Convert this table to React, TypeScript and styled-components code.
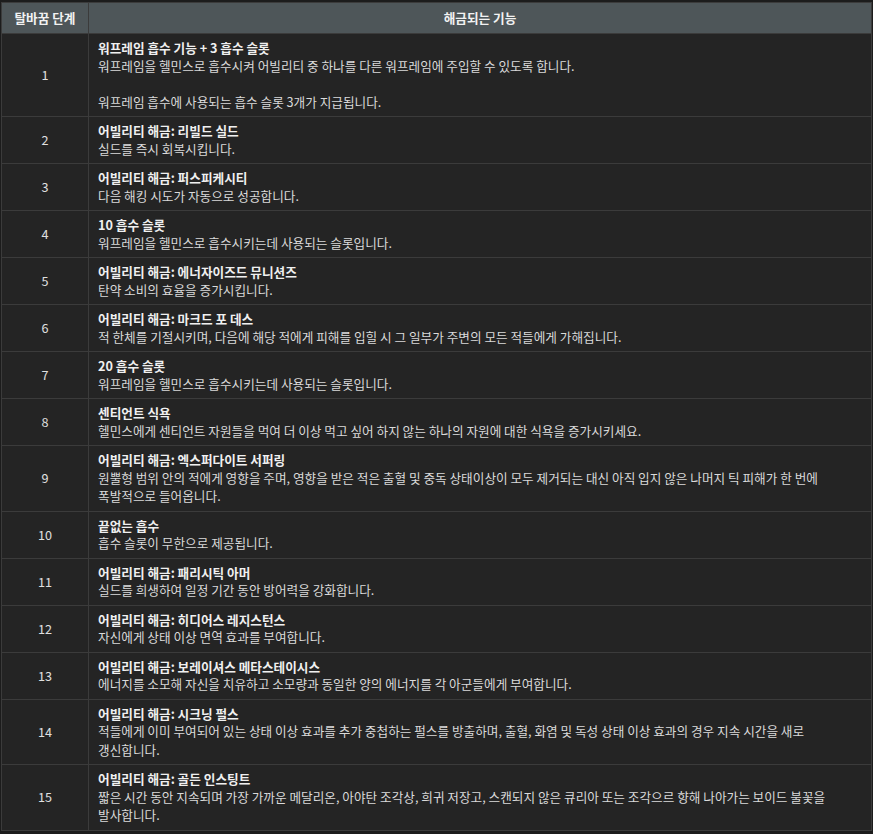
import React from "react";
import styled, { createGlobalStyle } from "styled-components";

const Global = createGlobalStyle`
  html, body { margin: 0; padding: 0; background: #1c1c1c; }
  body { font-family: "Noto Sans CJK KR", "Noto Sans", sans-serif; }
`;

const Wrap = styled.div`
  padding: 2px 1px 1px 1px;
`;

const Table = styled.table`
  width: 871px;
  border-collapse: collapse;
  background: #242424;
  border: 1px solid #3b3b3b;
  font-size: 12.65px;
  line-height: 18px;
  color: #dcdcdc;
  word-break: keep-all;
`;

const Th = styled.th<{ $w?: number }>`
  background: #4e5659;
  color: #f2f2f2;
  font-weight: 700;
  height: 30px;
  padding: 0 6px;
  border: 1px solid #3b3b3b;
  text-align: center;
  ${(p) => (p.$w ? `width: ${p.$w}px;` : "")}
`;

const NumCell = styled.td`
  border: 1px solid #3b3b3b;
  text-align: center;
  vertical-align: middle;
  padding: 5px 6px;
  color: #e0e0e0;
`;

const DescCell = styled.td`
  border: 1px solid #3b3b3b;
  padding: 5px 9px;
  vertical-align: middle;
`;

const Title = styled.div`
  font-weight: 700;
  color: #f0f0f0;
  line-height: 17.5px;
`;

const Text = styled.div`
  color: #dadada;
  line-height: 18.5px;
`;

const Gap = styled.div`
  height: 17.5px;
`;

type Row = { n: number; title: string; lines: (string | null)[] };

const rows: Row[] = [
  {
    n: 1,
    title: "워프레임 흡수 기능 + 3 흡수 슬롯",
    lines: [
      "워프레임을 헬민스로 흡수시켜 어빌리티 중 하나를 다른 워프레임에 주입할 수 있도록 합니다.",
      null,
      "워프레임 흡수에 사용되는 흡수 슬롯 3개가 지급됩니다.",
    ],
  },
  { n: 2, title: "어빌리티 해금: 리빌드 실드", lines: ["실드를 즉시 회복시킵니다."] },
  { n: 3, title: "어빌리티 해금: 퍼스피케시티", lines: ["다음 해킹 시도가 자동으로 성공합니다."] },
  { n: 4, title: "10 흡수 슬롯", lines: ["워프레임을 헬민스로 흡수시키는데 사용되는 슬롯입니다."] },
  { n: 5, title: "어빌리티 해금: 에너자이즈드 뮤니션즈", lines: ["탄약 소비의 효율을 증가시킵니다."] },
  {
    n: 6,
    title: "어빌리티 해금: 마크드 포 데스",
    lines: ["적 한체를 기절시키며, 다음에 해당 적에게 피해를 입힐 시 그 일부가 주변의 모든 적들에게 가해집니다."],
  },
  { n: 7, title: "20 흡수 슬롯", lines: ["워프레임을 헬민스로 흡수시키는데 사용되는 슬롯입니다."] },
  {
    n: 8,
    title: "센티언트 식욕",
    lines: ["헬민스에게 센티언트 자원들을 먹여 더 이상 먹고 싶어 하지 않는 하나의 자원에 대한 식욕을 증가시키세요."],
  },
  {
    n: 9,
    title: "어빌리티 해금: 엑스퍼다이트 서퍼링",
    lines: [
      "원뿔형 범위 안의 적에게 영향을 주며, 영향을 받은 적은 출혈 및 중독 상태이상이 모두 제거되는 대신 아직 입지 않은 나머지 틱 피해가 한 번에 폭발적으로 들어옵니다.",
    ],
  },
  { n: 10, title: "끝없는 흡수", lines: ["흡수 슬롯이 무한으로 제공됩니다."] },
  { n: 11, title: "어빌리티 해금: 패리시틱 아머", lines: ["실드를 희생하여 일정 기간 동안 방어력을 강화합니다."] },
  { n: 12, title: "어빌리티 해금: 히디어스 레지스턴스", lines: ["자신에게 상태 이상 면역 효과를 부여합니다."] },
  {
    n: 13,
    title: "어빌리티 해금: 보레이셔스 메타스테이시스",
    lines: ["에너지를 소모해 자신을 치유하고 소모량과 동일한 양의 에너지를 각 아군들에게 부여합니다."],
  },
  {
    n: 14,
    title: "어빌리티 해금: 시크닝 펄스",
    lines: [
      "적들에게 이미 부여되어 있는 상태 이상 효과를 추가 중첩하는 펄스를 방출하며, 출혈, 화염 및 독성 상태 이상 효과의 경우 지속 시간을 새로 갱신합니다.",
    ],
  },
  {
    n: 15,
    title: "어빌리티 해금: 골든 인스팅트",
    lines: [
      "짧은 시간 동안 지속되며 가장 가까운 메달리온, 아야탄 조각상, 희귀 저장고, 스캔되지 않은 큐리아 또는 조각으르 향해 나아가는 보이드 불꽃을 발사합니다.",
    ],
  },
];

export default function App() {
  return (
    <>
      <Global />
      <Wrap>
        <Table>
          <thead>
            <tr>
              <Th $w={74}>탈바꿈 단계</Th>
              <Th>해금되는 기능</Th>
            </tr>
          </thead>
          <tbody>
            {rows.map((r) => (
              <tr key={r.n}>
                <NumCell>{r.n}</NumCell>
                <DescCell>
                  <Title>{r.title}</Title>
                  {r.lines.map((l, i) => (l === null ? <Gap key={i} /> : <Text key={i}>{l}</Text>))}
                </DescCell>
              </tr>
            ))}
          </tbody>
        </Table>
      </Wrap>
    </>
  );
}
